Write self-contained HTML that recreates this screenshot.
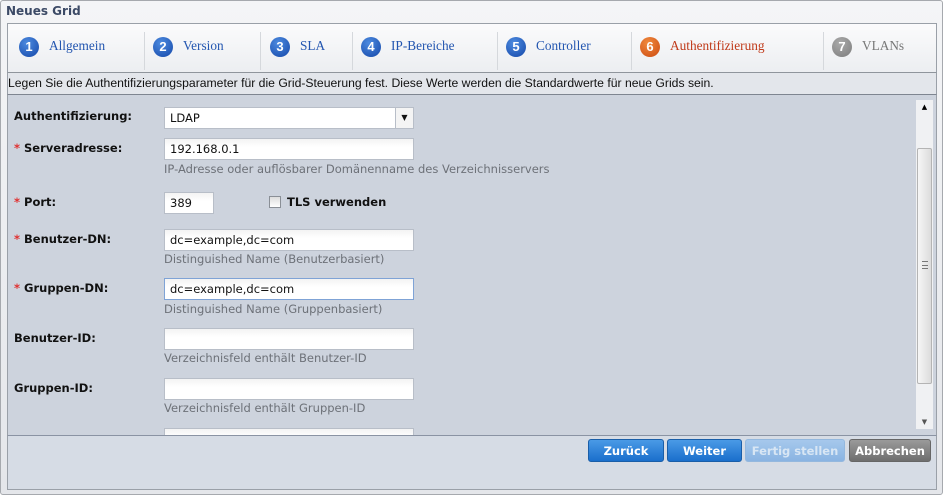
<!DOCTYPE html>
<html><head><meta charset="utf-8"><style>
*{box-sizing:border-box;margin:0;padding:0}
body{width:943px;height:503px;background:#fff;position:relative;overflow:hidden;font-family:"DejaVu Sans",Verdana,sans-serif}
.win{position:absolute;left:0;top:0;width:943px;height:495px;background:linear-gradient(#f4f5f7,#e4e6ea);border:1px solid #a6a9ae;border-radius:3px}
.title{position:absolute;left:6px;top:4px;font-size:12px;font-weight:bold;color:#3c4a66}
.tabs{position:absolute;left:7px;top:23px;width:930px;height:50px;background:linear-gradient(#fbfbfc,#eceef1);border:1px solid #9aa0a8;border-bottom:1px solid #8f959c}
.tab{position:absolute;top:12px;height:24px;font-family:"Liberation Serif",serif;font-size:13.3px;line-height:20px}
.c{position:absolute;left:0;top:1px;width:20px;height:20px;border-radius:50%;color:#fff;font-family:"Liberation Sans",sans-serif;font-weight:bold;font-size:13px;text-align:center;line-height:20px}
.b{background:radial-gradient(circle at 40% 30%,#4d8be0,#1447a8)}
.o{background:radial-gradient(circle at 40% 30%,#f08a3e,#cc4a10)}
.g{background:radial-gradient(circle at 40% 30%,#aaa,#7c7c7c)}
.tab span{position:absolute;left:30px;top:0;white-space:nowrap}
.div{position:absolute;top:8px;width:1px;height:38px;background:#d5d8dc}
.desc{position:absolute;left:7px;top:73px;width:930px;height:22px;background:#e3e6eb;border-left:1px solid #9aa0a8;border-right:1px solid #9aa0a8;border-bottom:1px solid #7e8590;font-family:"Liberation Sans",sans-serif;font-size:12.2px;line-height:20px;color:#111}
.form{position:absolute;left:7px;top:95px;width:930px;height:341px;background:#cdd3dd;border-left:1px solid #9aa0a8;border-right:1px solid #9aa0a8;border-bottom:1px solid #8a93a3;overflow:hidden}
.lbl{position:absolute;left:6px;font-size:11.5px;font-weight:bold;color:#111}
.lbl i{color:#e03030;font-style:normal;margin-right:4px}
.inp{position:absolute;left:156px;width:250px;height:22px;background:linear-gradient(#f3f3f3,#fff 40%);border:1px solid #b8bec8;font-size:11.5px;line-height:20px;padding-left:5px;color:#111}
.hint{position:absolute;left:156px;font-size:11.5px;color:#6d7178}
.sb{position:absolute;left:908px;top:5px;width:17px;height:329px;background:#f0f1f3}
.thumb{position:absolute;left:1px;top:48px;width:15px;height:236px;background:linear-gradient(90deg,#f6f6f6,#dcdcdc);border:1px solid #b4b4b4;border-radius:2px}
.foot{position:absolute;left:7px;top:436px;width:930px;height:54px;background:#d6dce5;border:1px solid #9aa0a8;border-top:none}
.btn{position:absolute;top:439px;height:23px;border-radius:3px;color:#fff;font-size:11.5px;font-weight:bold;text-align:center;line-height:22px}
.bl{background:linear-gradient(#4a9ae6,#1a6fcc);border:1px solid #1a5ea8}
.dis{background:linear-gradient(#a6c8ec,#8ab4e2);color:#d8e6f4;border:1px solid #94b8de}
.gr{background:linear-gradient(#9a9a9a,#6e6e6e);border:1px solid #666}
</style></head><body>
<div class="win"></div>
<div class="title">Neues Grid</div>
<div class="tabs">
<div class="tab" style="left:11px"><div class="c b">1</div><span style="color:#2255b0">Allgemein</span></div>
<div class="div" style="left:136px"></div>
<div class="tab" style="left:145px"><div class="c b">2</div><span style="color:#2255b0">Version</span></div>
<div class="div" style="left:252px"></div>
<div class="tab" style="left:262px"><div class="c b">3</div><span style="color:#2255b0">SLA</span></div>
<div class="div" style="left:344px"></div>
<div class="tab" style="left:353px"><div class="c b">4</div><span style="color:#2255b0">IP-Bereiche</span></div>
<div class="div" style="left:489px"></div>
<div class="tab" style="left:498px"><div class="c b">5</div><span style="color:#2255b0">Controller</span></div>
<div class="div" style="left:623px"></div>
<div class="tab" style="left:632px"><div class="c o">6</div><span style="color:#c03a1a">Authentifizierung</span></div>
<div class="div" style="left:815px"></div>
<div class="tab" style="left:824px"><div class="c g">7</div><span style="color:#777">VLANs</span></div>
</div>
<div class="desc">Legen Sie die Authentifizierungsparameter für die Grid-Steuerung fest. Diese Werte werden die Standardwerte für neue Grids sein.</div>
<div class="form">
<div class="lbl" style="top:14px">Authentifizierung:</div>
<div class="inp" style="top:12px;background:#fff">LDAP<div style="position:absolute;right:0;top:0;width:18px;height:20px;border-left:1px solid #b8bec8;background:#f4f4f4;font-size:8px;text-align:center;line-height:20px">▼</div></div>
<div class="lbl" style="top:46px"><i>*</i>Serveradresse:</div>
<div class="inp" style="top:43px">192.168.0.1</div>
<div class="hint" style="top:67px">IP-Adresse oder auflösbarer Domänenname des Verzeichnisservers</div>
<div class="lbl" style="top:100px"><i>*</i>Port:</div>
<div class="inp" style="top:97px;width:50px">389</div>
<div style="position:absolute;left:261px;top:101px;width:12px;height:12px;border:1px solid #8a8f96;background:linear-gradient(#ddd,#fff)"></div>
<div class="lbl" style="left:279px;top:100px">TLS verwenden</div>
<div class="lbl" style="top:137px"><i>*</i>Benutzer-DN:</div>
<div class="inp" style="top:134px">dc=example,dc=com</div>
<div class="hint" style="top:157px">Distinguished Name (Benutzerbasiert)</div>
<div class="lbl" style="top:186px"><i>*</i>Gruppen-DN:</div>
<div class="inp" style="top:183px;border-color:#7fa3d6">dc=example,dc=com</div>
<div class="hint" style="top:207px">Distinguished Name (Gruppenbasiert)</div>
<div class="lbl" style="top:236px">Benutzer-ID:</div>
<div class="inp" style="top:233px"></div>
<div class="hint" style="top:256px">Verzeichnisfeld enthält Benutzer-ID</div>
<div class="lbl" style="top:286px">Gruppen-ID:</div>
<div class="inp" style="top:283px"></div>
<div class="hint" style="top:306px">Verzeichnisfeld enthält Gruppen-ID</div>
<div class="inp" style="top:333px"></div>
<div class="sb"><div style="position:absolute;top:3px;width:17px;text-align:center;font-size:7px">▲</div><div class="thumb"><div style="position:absolute;left:4px;top:112px;width:6px;height:8px;border-top:1px solid #777;border-bottom:1px solid #777"><div style="margin-top:3px;height:1px;background:#777"></div></div></div><div style="position:absolute;top:318px;width:17px;text-align:center;font-size:7px;color:#555">▼</div></div>
</div>
<div class="foot"></div>
<div class="btn bl" style="left:588px;width:76px">Zurück</div>
<div class="btn bl" style="left:667px;width:75px">Weiter</div>
<div class="btn dis" style="left:745px;width:100px">Fertig stellen</div>
<div class="btn gr" style="left:849px;width:82px">Abbrechen</div>
</body></html>
